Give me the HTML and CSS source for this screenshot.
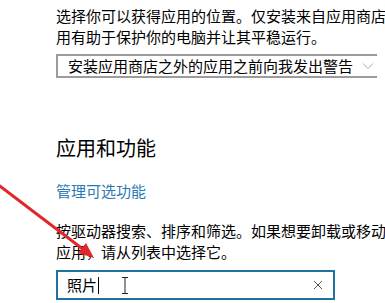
FILE: index.html
```html
<!DOCTYPE html>
<html lang="zh">
<head>
<meta charset="utf-8">
<link rel="stylesheet" href="styles.css">
</head>
<body>
<div class="page">
  <p class="desc">选择你可以获得应用的位置。仅安装来自应用商店的应<br>用有助于保护你的电脑并让其平稳运行。</p>
  <div class="select">
    <span class="select-text">安装应用商店之外的应用之前向我发出警告</span>
    <svg class="chev" width="12" height="8" viewBox="0 0 12 8"><polyline points="1,1.5 6,6.5 11,1.5" fill="none" stroke="#a8a8a8" stroke-width="1"/></svg>
  </div>
  <h2 class="title">应用和功能</h2>
  <a class="link">管理可选功能</a>
  <p class="desc desc2">按驱动器搜索、排序和筛选。如果想要卸载或移动<br>应用，请从列表中选择它。</p>
  <div class="search">
    <span class="search-text">照片</span><span class="caret"></span>
    <svg class="ibeam" width="8" height="17" viewBox="0 0 8 17"><path d="M1 0.5h6M1 16.5h6M4 0.5v16" fill="none" stroke="#222" stroke-width="1"/></svg>
    <svg class="clear" width="10" height="10" viewBox="0 0 10 10"><path d="M1 1L9 9M9 1L1 9" fill="none" stroke="#555" stroke-width="1"/></svg>
  </div>
</div>
<svg class="arrow" width="385" height="303" viewBox="0 0 385 303">
  <line x1="-4" y1="183" x2="84" y2="250" stroke="#e0282a" stroke-width="3"/>
  <polygon points="94,258 78,253 86,243" fill="#e0282a"/>
</svg>
</body>
</html>
```
FILE: styles.css
```css
html, body {
  margin: 0;
  padding: 0;
  background: #fff;
}
body {
  width: 385px;
  height: 303px;
  overflow: hidden;
  position: relative;
  font-family: "Noto Sans CJK SC", "Microsoft YaHei", sans-serif;
  color: #000;
}
.page {
  padding: 5px 0 0 56px;
  display: flex;
  flex-direction: column;
  align-items: flex-start;
}
.desc {
  margin: 0;
  font-size: 15px;
  line-height: 21px;
  white-space: nowrap;
}
.select {
  margin-top: 7px;
  box-sizing: border-box;
  width: 321px;
  height: 24px;
  border: 2px solid #9c9c9c;
  border-right: none;
  display: flex;
  align-items: center;
  padding-left: 10px;
  overflow: hidden;
}
.select-text {
  font-size: 15px;
  line-height: 20px;
  white-space: nowrap;
  flex: 1;
}
.chev {
  margin-right: 3px;
  flex: none;
}
.title {
  margin: 56px 0 0;
  font-size: 20px;
  font-weight: normal;
  line-height: 28px;
}
.link {
  margin-top: 18px;
  font-size: 15px;
  line-height: 21px;
  color: #2b79b5;
}
.desc2 {
  margin-top: 19px;
}
.search {
  margin-top: 8px;
  box-sizing: border-box;
  width: 279px;
  height: 30px;
  border: 2px solid #22729f;
  display: flex;
  align-items: center;
  padding-left: 9px;
  position: relative;
}
.search-text {
  font-size: 15px;
  line-height: 20px;
}
.caret {
  width: 1px;
  height: 17px;
  background: #000;
  margin-left: 1px;
}
.ibeam {
  margin-left: 22px;
}
.clear {
  margin-left: auto;
  margin-right: 10px;
}
.arrow {
  position: absolute;
  left: 0;
  top: 0;
  pointer-events: none;
}
```
